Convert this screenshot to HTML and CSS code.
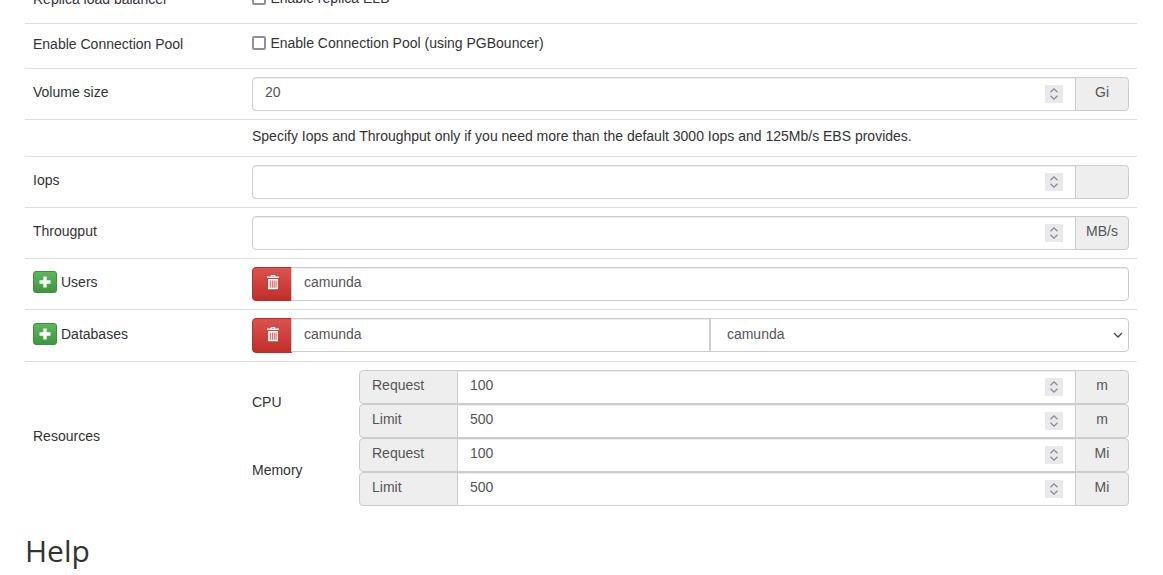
FILE: index.html
```html
<!DOCTYPE html>
<html lang="en">
<head>
<meta charset="utf-8">
<title>Cluster form</title>
<link rel="stylesheet" href="styles.css">
</head>
<body>
<svg class="sprite" aria-hidden="true">
<symbol id="i-spin" viewBox="0 0 18 18"><rect width="18" height="18" fill="#e9e9ed"/><path d="M5.500 7.200L9 3.900l3.500 3.300M5.500 10.800L9 14.100l3.500-3.300" fill="none" stroke="#8a8a94" stroke-width="1.300"/></symbol>
<symbol id="i-plus" viewBox="0 0 12 12"><path d="M4.300 0.500h3.400v3.800h3.800v3.400H7.700v3.800H4.300V7.700H0.500V4.300h3.800z" fill="#fff"/></symbol>
<symbol id="i-trash" viewBox="0 0 14 16"><path d="M5 1h4l.6 1.500H13v1.500H1V2.500h3.400zM5.700 2.500h2.600L8 1.900H6zM2 5h10v10.200H2zM3.800 6.500v7.200h.9V6.500zM5.800 6.500v7.200h.9V6.500zM7.700 6.500v7.200h.9V6.500zM9.600 6.500v7.200h.9V6.500z" fill="#fff" fill-rule="evenodd"/></symbol>
</svg>
<main class="page">
<table class="form-table">
<colgroup><col class="col-label"><col></colgroup>
<tbody>
<tr class="first">
<td><label class="row-label">Replica load balancer</label></td>
<td><label class="check"><input type="checkbox"> Enable replica ELB</label></td>
</tr>
<tr>
<td><label class="row-label">Enable Connection Pool</label></td>
<td><label class="check"><input type="checkbox"> Enable Connection Pool (using PGBouncer)</label></td>
</tr>
<tr>
<td><label class="row-label">Volume size</label></td>
<td><div class="group"><input class="field" type="number" value="20"><svg class="spin"><use href="#i-spin"/></svg><span class="addon addon-end">Gi</span></div></td>
</tr>
<tr>
<td></td>
<td class="note">Specify Iops and Throughput only if you need more than the default 3000 Iops and 125Mb/s EBS provides.</td>
</tr>
<tr>
<td><label class="row-label">Iops</label></td>
<td><div class="group"><input class="field" type="number"><svg class="spin"><use href="#i-spin"/></svg><span class="addon addon-end"></span></div></td>
</tr>
<tr>
<td><label class="row-label">Througput</label></td>
<td><div class="group"><input class="field" type="number"><svg class="spin"><use href="#i-spin"/></svg><span class="addon addon-end">MB/s</span></div></td>
</tr>
<tr>
<td><button class="add" type="button" aria-label="Add user"><svg class="plus"><use href="#i-plus"/></svg></button><label class="row-label add-label">Users</label></td>
<td><div class="group"><button class="del" type="button" aria-label="Remove user"><svg class="trash"><use href="#i-trash"/></svg></button><input class="field text-field end" type="text" value="camunda"></div></td>
</tr>
<tr>
<td class="low"><button class="add" type="button" aria-label="Add database"><svg class="plus"><use href="#i-plus"/></svg></button><label class="row-label add-label">Databases</label></td>
<td><div class="group tall"><button class="del" type="button" aria-label="Remove database"><svg class="trash"><use href="#i-trash"/></svg></button><input class="field text-field half" type="text" value="camunda"><select class="picker"><option>camunda</option></select></div></td>
</tr>
<tr>
<td><label class="row-label">Resources</label></td>
<td>
<div class="resources">
<div class="res-name">CPU</div>
<div class="res-groups">
<div class="group"><span class="addon addon-start">Request</span><input class="field" type="number" value="100"><svg class="spin"><use href="#i-spin"/></svg><span class="addon addon-end">m</span></div>
<div class="group"><span class="addon addon-start">Limit</span><input class="field" type="number" value="500"><svg class="spin"><use href="#i-spin"/></svg><span class="addon addon-end">m</span></div>
</div>
<div class="res-name">Memory</div>
<div class="res-groups">
<div class="group"><span class="addon addon-start">Request</span><input class="field" type="number" value="100"><svg class="spin"><use href="#i-spin"/></svg><span class="addon addon-end">Mi</span></div>
<div class="group"><span class="addon addon-start">Limit</span><input class="field" type="number" value="500"><svg class="spin"><use href="#i-spin"/></svg><span class="addon addon-end">Mi</span></div>
</div>
</div>
</td>
</tr>
</tbody>
</table>
<h2 class="help">Help</h2>
</main>
</body>
</html>
```
FILE: styles.css
```css
* { box-sizing: border-box; }
html, body { margin: 0; height: 100%; overflow: hidden; background: #fff; }
body {
  font-family: "Liberation Sans", Arial, sans-serif;
  font-size: 14px;
  line-height: 20px;
  color: #333;
}
.sprite { display: none; }
.page { margin-top: -21px; padding: 0 26px 0 25px; }
.form-table { width: 100%; border-collapse: collapse; table-layout: fixed; }
.col-label { width: 219px; }
.form-table td { padding: 8px; border-top: 1px solid #ddd; vertical-align: middle; }
.form-table tr.first td { border-top: 0; }
.form-table td.note { padding: 6px 8px 10px; }
.form-table td.low { padding: 9px 8px 7px; }
.row-label { display: inline-block; font-weight: 400; margin-bottom: 5px; }
.add-label { margin-left: 4px; vertical-align: middle; }
.check { display: block; height: 28px; padding-top: 1px; }
.check input {
  appearance: none;
  width: 14px;
  height: 14px;
  margin: 0 .5px 0 0;
  vertical-align: -2px;
  background: #fff;
  border: 2px solid #8f8f9d;
  border-radius: 2px;
}
.group { display: flex; align-items: flex-start; height: 34px; }
.group.tall { height: 35px; }
.field {
  flex: 1 1 0;
  min-width: 0;
  height: 34px;
  padding: 4px 12px 8px;
  font: inherit;
  color: #555;
  background: #fff;
  border: 1px solid #ccc;
  box-shadow: inset 0 1px 1px rgba(0, 0, 0, .075);
  border-radius: 4px 0 0 4px;
  appearance: textfield;
}
.field::-webkit-inner-spin-button { appearance: none; margin: 0; }
.spin {
  flex: none;
  width: 18px;
  height: 18px;
  margin: 8px 13px 0 -31px;
}
.addon {
  flex: none;
  height: 34px;
  padding: 4px 8px 8px;
  text-align: center;
  color: #555;
  background: #eee;
  border: 1px solid #ccc;
}
.addon-end { width: 54px; margin-left: -1px; border-radius: 0 4px 4px 0; }
.addon-start { width: 99px; margin-right: -1px; padding-left: 12px; text-align: left; border-radius: 4px 0 0 4px; }
.addon-start + .field { border-radius: 0; }
.text-field { border-radius: 0; }
.text-field.end { border-radius: 0 4px 4px 0; }
.field.half { flex: 1 1 50%; border-radius: 0; padding-top: 5px; padding-bottom: 7px; }
.picker {
  flex: 1 1 50%;
  min-width: 0;
  height: 34px;
  padding: 5px 12px 7px 16px;
  font: inherit;
  color: #555;
  border: 1px solid #ccc;
  border-radius: 0 4px 4px 0;
  appearance: none;
  background: #fff url("data:image/svg+xml,%3Csvg xmlns='http://www.w3.org/2000/svg' width='10' height='6'%3E%3Cpath d='M1 1l4 4 4-4' fill='none' stroke='%23444' stroke-width='1.300'/%3E%3C/svg%3E") no-repeat right 5px center;
}
.add {
  display: inline-flex;
  align-items: center;
  justify-content: center;
  width: 24px;
  height: 22px;
  padding: 0;
  vertical-align: middle;
  border: 1px solid #3e8f3e;
  border-radius: 3px;
  background: linear-gradient(#5cb85c, #419641);
  margin-bottom: 5px;
}
.plus { width: 12px; height: 12px; }
.del {
  display: flex;
  flex: none;
  align-items: center;
  justify-content: center;
  width: 40px;
  height: 34px;
  padding: 0 0 4px 2px;
  margin-right: -1px;
  border: 1px solid #b92c28;
  border-radius: 4px 0 0 4px;
  background: linear-gradient(#d9534f, #c12e2a);
}
.tall .del { height: 35px; }
.trash { width: 14px; height: 16px; }
.resources { display: grid; grid-template-columns: 107px 1fr; align-items: center; }
.res-name { padding-bottom: 4px; }
.help {
  margin: 20px 0 10px;
  font-family: "Open Sans", sans-serif;
  font-size: 30px;
  font-weight: 400;
  line-height: 33px;
  color: #333;
}
```
